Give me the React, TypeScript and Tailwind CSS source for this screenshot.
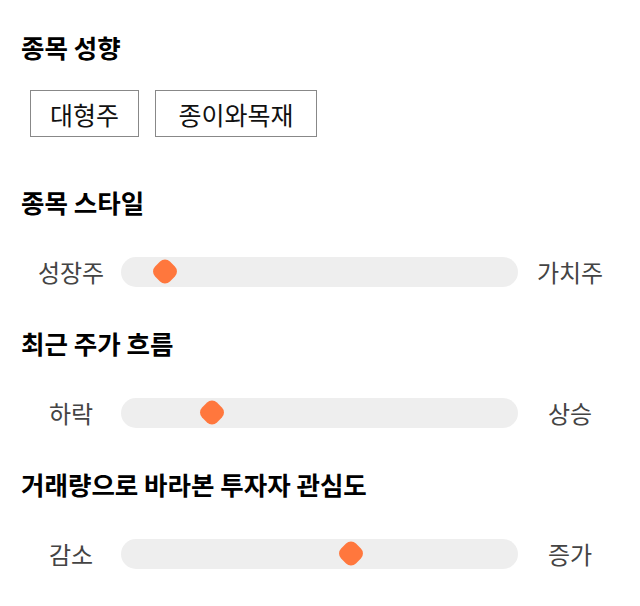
const FONT = '"Noto Sans CJK KR", "Noto Sans", sans-serif';

const sliders = [
  { title: "종목 스타일", left: "성장주", right: "가치주", pos: 0.11 },
  { title: "최근 주가 흐름", left: "하락", right: "상승", pos: 0.229 },
  { title: "거래량으로 바라본 투자자 관심도", left: "감소", right: "증가", pos: 0.579 },
];

function Slider({ left, right, pos }: { left: string; right: string; pos: number }) {
  return (
    <div className="flex items-center h-[30px]">
      <div className="w-[100px] shrink-0 text-center text-[24px] leading-[30px] text-[#444]">{left}</div>
      <div className="relative h-[30px] w-[397px] shrink-0 rounded-full bg-[#eeeeee]">
        <span
          className="absolute top-[4px] h-[21px] w-[21px] -translate-x-1/2 rotate-45 rounded-[7px] bg-[#ff773d]"
          style={{ left: `${pos * 100}%` }}
        />
      </div>
      <div className="w-[104px] shrink-0 text-center text-[24px] leading-[30px] text-[#444]">{right}</div>
    </div>
  );
}

export default function App() {
  return (
    <div className="min-h-[606px] w-[640px] bg-white px-[21px] pt-[33px]" style={{ fontFamily: FONT }}>
      <h2 className="text-[25.5px] font-bold leading-[28px] text-black">종목 성향</h2>
      <div className="mt-[29px] ml-[9px] flex gap-[16px]">
        <button className="h-[47px] w-[109px] border border-[#888] text-center text-[25px] leading-[30px] text-[#111]">대형주</button>
        <button className="h-[47px] w-[162px] border border-[#888] text-center text-[25px] leading-[30px] text-[#111]">종이와목재</button>
      </div>
      {sliders.map((s, i) => (
        <div key={s.title} className={i === 0 ? "mt-[51px]" : "mt-[42px]"}>
          <h2 className="text-[25.5px] font-bold leading-[28px] text-black">{s.title}</h2>
          <div className="mt-[41px]">
            <Slider left={s.left} right={s.right} pos={s.pos} />
          </div>
        </div>
      ))}
    </div>
  );
}
